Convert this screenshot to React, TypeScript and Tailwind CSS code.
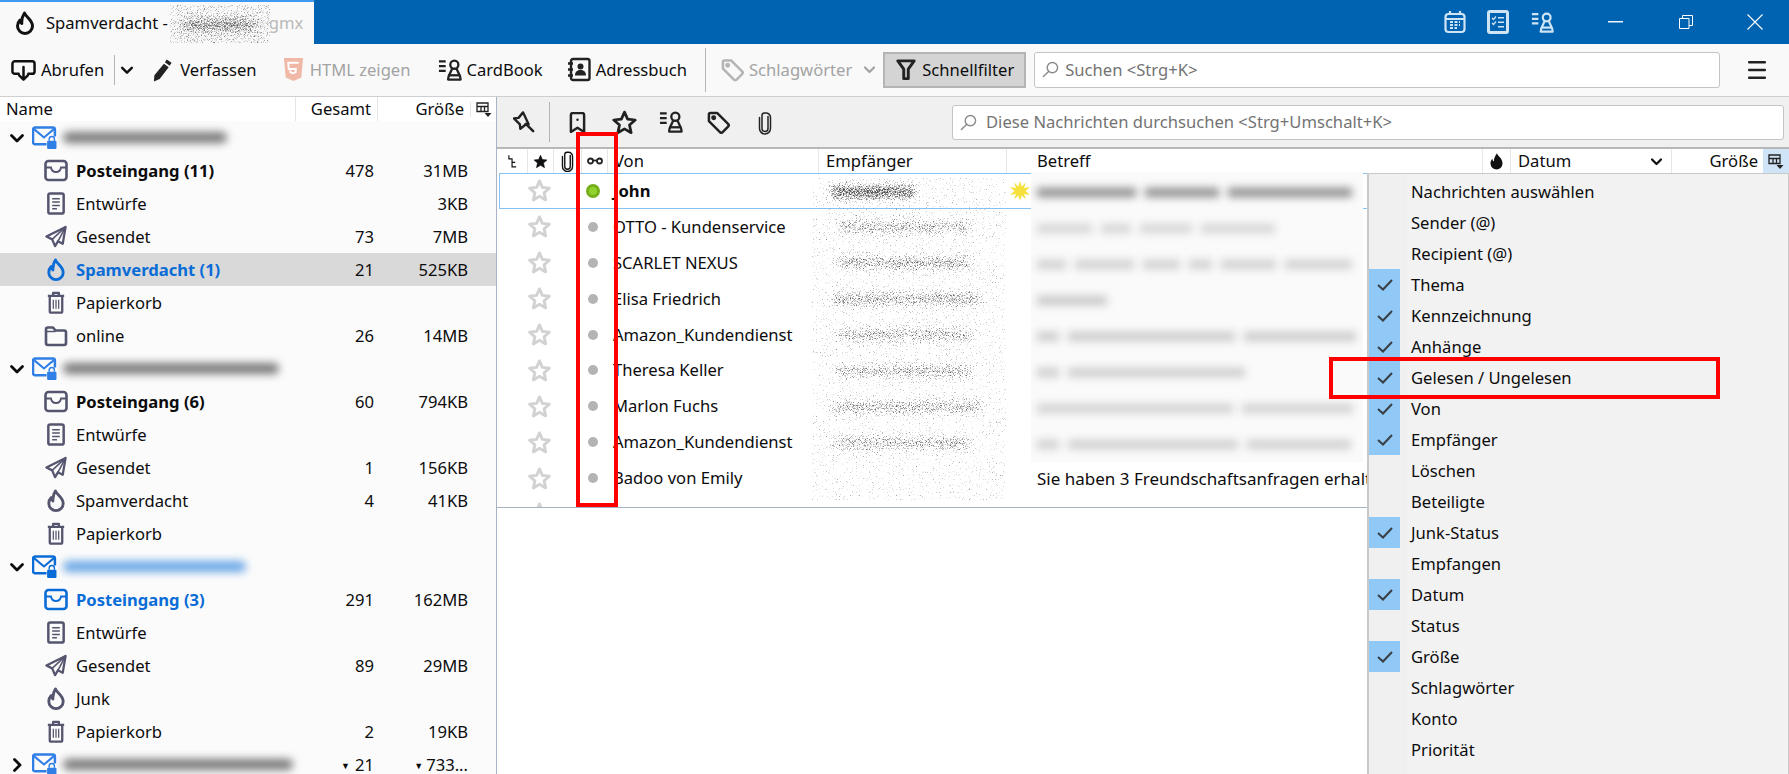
import React from "react";

type IconProps = { className?: string };

const Flame: React.FC<IconProps> = ({ className }) => (
    <svg viewBox="0 0 20 24" fill="none" stroke="currentColor" strokeWidth="3" strokeLinejoin="round" className={className}>
        <path d="M9.500 2c.5 3.500 8 6.500 8 13a7.500 7.500 0 0 1-15 0c0-2.500 1-4.500 2.500-6 0 1.500.6 2.800 1.800 3.500C6.500 8.500 7.800 4.500 9.500 2z" />
    </svg>
);

const Inbox: React.FC<IconProps> = ({ className }) => (
    <svg viewBox="0 0 24 22" fill="none" stroke="currentColor" strokeWidth="2.600" className={className}>
        <rect x="1.500" y="1.500" width="21" height="19" rx="3" />
        <path d="M2 8h5c.5 3 2 4.500 5 4.500s4.500-1.500 5-4.500h5" strokeWidth="1.800" />
    </svg>
);

const Draft: React.FC<IconProps> = ({ className }) => (
    <svg viewBox="0 0 20 24" fill="none" stroke="currentColor" strokeWidth="2.600" className={className}>
        <rect x="2" y="1.500" width="16" height="21" rx="2" />
        <path d="M6 7h8M6 10.500h8M6 14h8M6 17.500h5" strokeWidth="1.500" />
    </svg>
);

const Sent: React.FC<IconProps> = ({ className }) => (
    <svg viewBox="0 0 24 24" fill="none" stroke="currentColor" strokeWidth="2.400" strokeLinejoin="round" className={className}>
        <path d="M22 2 2 12l6 3 3 7 3-5 5 2.500z" />
        <path d="M22 2 8 15M22 2l-8 15" strokeWidth="1.600" />
    </svg>
);

const Trash: React.FC<IconProps> = ({ className }) => (
    <svg viewBox="0 0 20 24" fill="none" stroke="currentColor" strokeWidth="2.400" strokeLinejoin="round" className={className}>
        <path d="M1.500 5h17M7 5V2h6v3" />
        <path d="M3.500 5.500v15.500a1.500 1.500 0 0 0 1.500 1.500h10a1.500 1.500 0 0 0 1.500-1.500V5.500" />
        <path d="M7.200 9v9.500M10 9v9.500M12.800 9v9.500" strokeWidth="1.300" />
    </svg>
);

const Folder: React.FC<IconProps> = ({ className }) => (
    <svg viewBox="0 0 24 22" fill="none" stroke="currentColor" strokeWidth="2.600" strokeLinejoin="round" className={className}>
        <path d="M2 5a2 2 0 0 1 2-2h5l2.500 3H20a2 2 0 0 1 2 2v10.500a2 2 0 0 1-2 2H4a2 2 0 0 1-2-2z" />
        <path d="M2 7h9.500" strokeWidth="1.500" />
    </svg>
);

const Account: React.FC<{ className?: string; lock: string }> = ({ className, lock }) => (
    <svg viewBox="0 0 24 22" fill="none" className={className}>
        <path d="M14 17.500H3a2 2 0 0 1-2-2V3.500a2 2 0 0 1 2-2h17a2 2 0 0 1 2 2V10" stroke="currentColor" strokeWidth="2.400" />
        <path d="m2 3 9.500 8L21 3" stroke="currentColor" strokeWidth="2" />
        <rect x="14.500" y="14" width="9" height="8" rx="1" fill={lock} />
        <path d="M16.500 14v-1.500a2.500 2.500 0 0 1 5 0V14" stroke={lock} strokeWidth="1.400" />
    </svg>
);

const Chevron: React.FC<{ className?: string; right?: boolean }> = ({ className, right }) => (
    <svg viewBox="0 0 16 16" fill="none" stroke="currentColor" strokeWidth="2.800" strokeLinecap="round" strokeLinejoin="round" className={className}>
        <path d={right ? "M5.500 2.500 11 8l-5.500 5.500" : "M2.500 5.500 8 11l5.500-5.500"} />
    </svg>
);

const Download: React.FC<IconProps> = ({ className }) => (
    <svg viewBox="0 0 26 24" fill="none" stroke="currentColor" strokeWidth="2.600" strokeLinecap="round" strokeLinejoin="round" className={className}>
        <path d="M8 16H4a2.500 2.500 0 0 1-2.500-2.500v-8A2.500 2.500 0 0 1 4 3h18a2.500 2.500 0 0 1 2.500 2.500v8A2.500 2.500 0 0 1 22 16h-4" />
        <path d="M13 9v13M8.500 17.500 13 22l4.500-4.500" />
    </svg>
);

const Pencil: React.FC<IconProps> = ({ className }) => (
    <svg viewBox="0 0 22 24" fill="currentColor" className={className}>
        <path d="m15.500 1 5 3.500-2 3-5-3.500zM12.500 5.500l5 3.500L8 21.500 2 24l.5-6.500z" />
    </svg>
);

const Html5: React.FC<IconProps> = ({ className }) => (
    <svg viewBox="0 0 22 24" className={className}>
        <path d="M1 0h20l-1.800 20.500L11 24l-8.200-3.500z" fill="#f0b8a6" />
        <path d="M16.500 5h-11l.5 6.500h7.500l-.3 3.500-2.700 1-2.700-1-.2-2" fill="none" stroke="#fff" strokeWidth="2" />
    </svg>
);

const CardBookIcon: React.FC<IconProps> = ({ className }) => (
    <svg viewBox="0 0 26 24" fill="none" stroke="currentColor" strokeWidth="2.400" strokeLinejoin="round" className={className}>
        <path d="M1 3h7M1 8h7M1 13h7" />
        <circle cx="17" cy="6.500" r="4.200" />
        <path d="M14.500 10.500c0 3-4 6-4 11.500h13c0-5.500-4-8.500-4-11.500" />
        <path d="M11 17.500h12" />
    </svg>
);

const AddressBook: React.FC<IconProps> = ({ className }) => (
    <svg viewBox="0 0 24 24" fill="none" stroke="currentColor" strokeWidth="2.400" className={className}>
        <rect x="4" y="1.500" width="18.500" height="21" rx="2" />
        <path d="M1 6h5M1 12h5M1 18h5" />
        <circle cx="13.500" cy="9" r="3" fill="currentColor" stroke="none" />
        <path d="M8 18c0-4 2.500-5.500 5.500-5.500S19 14 19 18z" fill="currentColor" stroke="none" />
    </svg>
);

const Tag: React.FC<IconProps> = ({ className }) => (
    <svg viewBox="0 0 24 24" fill="none" stroke="currentColor" strokeWidth="2.600" strokeLinejoin="round" className={className}>
        <path d="M2 3.500A1.500 1.500 0 0 1 3.500 2h7L22 13.500a2 2 0 0 1 0 2.800L16.300 22a2 2 0 0 1-2.800 0L2 10.500z" />
        <circle cx="7" cy="7" r="1.300" fill="currentColor" />
    </svg>
);

const Funnel: React.FC<IconProps> = ({ className }) => (
    <svg viewBox="0 0 22 24" fill="none" stroke="currentColor" strokeWidth="3.200" strokeLinejoin="round" className={className}>
        <path d="M2 2h18l-6.500 9v10.500h-5V11z" />
    </svg>
);

const Search: React.FC<IconProps> = ({ className }) => (
    <svg viewBox="0 0 18 18" fill="none" stroke="currentColor" strokeWidth="1.500" strokeLinecap="round" className={className}>
        <circle cx="11" cy="7" r="5.500" />
        <path d="M7 11 1.500 16.500" />
    </svg>
);

const Pin: React.FC<IconProps> = ({ className }) => (
    <svg viewBox="0 0 24 24" fill="none" stroke="currentColor" strokeWidth="2.600" strokeLinejoin="round" className={className}>
        <path d="M11 1.500 6 7.500l-5 .5 6.500 6.500.5 5 5.500-4.500 3.500-.5z" />
        <path d="m14 14 8 8" strokeLinecap="round" strokeWidth="2.800" />
    </svg>
);

const Bookmark: React.FC<IconProps> = ({ className }) => (
    <svg viewBox="0 0 18 22" fill="none" stroke="currentColor" strokeWidth="2.600" strokeLinejoin="round" className={className}>
        <path d="M2 3a2 2 0 0 1 2-2h10a2 2 0 0 1 2 2v18l-7-4.500L2 21z" />
        <circle cx="9" cy="8" r="1.300" fill="currentColor" stroke="none" />
    </svg>
);

const Star: React.FC<{ className?: string; filled?: boolean; sw?: string }> = ({ className, filled, sw = "2.600" }) => (
    <svg viewBox="0 0 24 24" fill={filled ? "currentColor" : "none"} stroke="currentColor" strokeWidth={sw} strokeLinejoin="round" className={className}>
        <path d="m12 2 3 6.800 7.300.8-5.500 4.900 1.600 7.300L12 18.100l-6.400 3.700 1.600-7.300-5.500-4.900 7.300-.8z" />
    </svg>
);

const Clip: React.FC<IconProps> = ({ className }) => (
    <svg viewBox="0 0 14 24" fill="none" stroke="currentColor" strokeWidth="1.500" strokeLinecap="round" className={className}>
        <path d="M10 6v12a3 3 0 0 1-6 0V5a2.500 2.500 0 0 1 2.500-2.500h1A4.500 4.500 0 0 1 12.500 7v11a5.500 5.500 0 0 1-11 0V7" />
    </svg>
);

const Picker: React.FC<IconProps> = ({ className }) => (
    <svg viewBox="0 0 16 15" fill="none" stroke="currentColor" strokeWidth="1.300" className={className}>
        <path d="M1 1h11v8.500H1zM1 4.500h11M5 4.500v5M8.500 4.500v5" />
        <path d="M8.500 11h7L12 15z" fill="currentColor" stroke="none" />
    </svg>
);

const Sparkle: React.FC<IconProps> = ({ className }) => (
    <svg viewBox="0 0 20 20" fill="#f5e03c" className={className}>
        <path d="m10 0 1.700 5.500L16 1.500 14 7l6-1-4.500 4 4.500 4-6-1 2 5.500-4.300-4L10 20l-1.700-5.500-4.300 4L6 13l-6 1 4.500-4L0 6l6 1-2-5.500 4.300 4z" />
    </svg>
);

// stippled redaction, used where the reference has noise over the text
const Stipple: React.FC<{ id: string; w: number; h: number; base?: string; bars: [number, number, number, number, number][]; className?: string }> = ({
    id,
    w,
    h,
    base = "0",
    bars,
    className,
}) => (
    <svg width={w} height={h} className={className}>
        <filter id={id} filterUnits="userSpaceOnUse" x="0" y="0" width={w} height={h} colorInterpolationFilters="sRGB">
            <feGaussianBlur in="SourceAlpha" stdDeviation="5" result="b" />
            <feTurbulence type="fractalNoise" baseFrequency="1.300" numOctaves="1" seed="7" result="t" />
            <feColorMatrix in="t" type="matrix" values="0 0 0 0 0.4  0 0 0 0 0.4  0 0 0 0 0.4  1 0 0 0 0" result="n" />
            <feComposite in="n" in2="b" operator="arithmetic" k1="0" k2="1" k3="0.42" k4={base} />
            <feComponentTransfer>
                <feFuncA type="linear" slope="3.500" intercept="-2.200" />
            </feComponentTransfer>
        </filter>
        <g filter={`url(#${id})`}>
            {bars.map(([x, y, bw, bh, o], i) => (
                <rect key={i} x={x} y={y} width={bw} height={bh} fillOpacity={o} />
            ))}
        </g>
    </svg>
);

type Row = {
    name: string;
    icon?: "inbox" | "draft" | "sent" | "junk" | "trash" | "folder";
    total?: string;
    size?: string;
    bold?: boolean;
    blue?: boolean;
    selected?: boolean;
    account?: { blur: string; color: string; closed?: boolean };
};

const rows: Row[] = [
    { name: "", account: { blur: "w-[164px]", color: "gray" } },
    { name: "Posteingang (11)", icon: "inbox", total: "478", size: "31MB", bold: true },
    { name: "Entwürfe", icon: "draft", size: "3KB" },
    { name: "Gesendet", icon: "sent", total: "73", size: "7MB" },
    { name: "Spamverdacht (1)", icon: "junk", total: "21", size: "525KB", bold: true, blue: true, selected: true },
    { name: "Papierkorb", icon: "trash" },
    { name: "online", icon: "folder", total: "26", size: "14MB" },
    { name: "", account: { blur: "w-[216px]", color: "gray" } },
    { name: "Posteingang (6)", icon: "inbox", total: "60", size: "794KB", bold: true },
    { name: "Entwürfe", icon: "draft" },
    { name: "Gesendet", icon: "sent", total: "1", size: "156KB" },
    { name: "Spamverdacht", icon: "junk", total: "4", size: "41KB" },
    { name: "Papierkorb", icon: "trash" },
    { name: "", account: { blur: "w-[183px]", color: "blue" } },
    { name: "Posteingang (3)", icon: "inbox", total: "291", size: "162MB", bold: true, blue: true },
    { name: "Entwürfe", icon: "draft" },
    { name: "Gesendet", icon: "sent", total: "89", size: "29MB" },
    { name: "Junk", icon: "junk" },
    { name: "Papierkorb", icon: "trash", total: "2", size: "19KB" },
    { name: "", total: "21", size: "733...", account: { blur: "w-[230px]", color: "gray", closed: true } },
];

const FolderIcon: React.FC<{ icon: Row["icon"]; color: string }> = ({ icon, color }) => {
    const cls = `h-[23px] w-[24px] ${color}`;
    if (icon === "inbox") return <Inbox className={cls} />;
    if (icon === "draft") return <Draft className={cls} />;
    if (icon === "sent") return <Sent className={cls} />;
    if (icon === "junk") return <Flame className={cls} />;
    if (icon === "trash") return <Trash className={cls} />;
    return <Folder className={cls} />;
};

const FolderRow: React.FC<{ row: Row }> = ({ row }) => {
    const { account } = row;
    const closed = account?.closed;
    return (
        <div className={`flex h-[33px] shrink-0 items-center pr-[28px] ${row.selected ? "bg-[#d9d9d9]" : ""}`}>
            <div className="flex min-w-0 flex-1 items-center">
                {account ? (
                    <>
                        <Chevron right={account.closed} className="ml-[9px] h-4 w-4 text-[#0c0c0d]" />
                        <Account
                            lock={account.color === "blue" ? "#0a6cd6" : "#2f7fe6"}
                            className={`ml-[7px] h-[23px] w-[25px] ${account.color === "blue" ? "text-[#0a6cd6]" : "text-[#2f7fe6]"}`}
                        />
                        <div className="flex h-[33px] flex-1 items-center overflow-hidden pl-[6px]">
                            <div className={`h-[11px] rounded-full blur-[4px] ${account.color === "blue" ? "bg-[#6aa6e6]" : "bg-[#787878]"} ${account.blur}`} />
                        </div>
                    </>
                ) : (
                    <>
                        <div className="ml-[44px] flex w-[32px] shrink-0">
                            <FolderIcon icon={row.icon} color={row.blue ? "text-[#0a6cd6]" : "text-[#55556f]"} />
                        </div>
                        <span className={`pt-[1px] ${row.bold ? "font-bold" : ""} ${row.blue ? "text-[#0a6cd6]" : "text-[#0c0c0d]"}`}>{row.name}</span>
                    </>
                )}
            </div>
            <div className="w-[60px] pt-[1px] text-right leading-[18px] whitespace-nowrap">
                {closed && <span className="mr-[5px] align-[2px] text-[9px]">▼</span>}
                {row.total}
            </div>
            <div className="w-[94px] pt-[1px] text-right leading-[18px] whitespace-nowrap">
                {closed && <span className="mr-[3px] align-[2px] text-[9px]">▼</span>}
                {row.size}
            </div>
        </div>
    );
};

const messages = [
    { from: "John", unread: true },
    { from: "OTTO - Kundenservice" },
    { from: "SCARLET NEXUS" },
    { from: "Elisa Friedrich" },
    { from: "Amazon_Kundendienst" },
    { from: "Theresa Keller" },
    { from: "Marlon Fuchs" },
    { from: "Amazon_Kundendienst" },
    { from: "Badoo von Emily", subject: "Sie haben 3 Freundschaftsanfragen erhalten" },
];

const MessageRow: React.FC<{ from: string; unread?: boolean; subject?: string }> = ({ from, unread, subject }) => (
    <div className={`flex h-[35.9px] items-center ${unread ? "ml-[2px] border border-[#86c3f3]" : "ml-[3px]"}`}>
        <div className="w-[26px]" />
        <div className="flex w-[26px] justify-center">
            <Star className="h-[23px] w-[23px] text-[#d2d2d2]" sw="3" />
        </div>
        <div className="w-[28px]" />
        <div className="flex w-[25px] justify-center">
            {unread ? (
                <div className="h-[14px] w-[14px] rounded-full border-[3px] border-[#76ae1c] bg-[#92d22e]" />
            ) : (
                <div className="h-[10px] w-[10px] rounded-full bg-[#b4b4b4]" />
            )}
        </div>
        <div className={`w-[213px] pt-[1px] pl-[8px] whitespace-nowrap ${unread ? "font-bold" : ""}`}>{from}</div>
        <div className="w-[186px]" />
        {unread && <Sparkle className="ml-[6px] h-[20px] w-[20px] shrink-0" />}
        <div className="pt-[1px] pl-[33px] text-[17px] whitespace-nowrap">{subject}</div>
    </div>
);

const menuItems: [string, boolean][] = [
    ["Nachrichten auswählen", false],
    ["Sender (@)", false],
    ["Recipient (@)", false],
    ["Thema", true],
    ["Kennzeichnung", true],
    ["Anhänge", true],
    ["Gelesen / Ungelesen", true],
    ["Von", true],
    ["Empfänger", true],
    ["Löschen", false],
    ["Beteiligte", false],
    ["Junk-Status", true],
    ["Empfangen", false],
    ["Datum", true],
    ["Status", false],
    ["Größe", true],
    ["Schlagwörter", false],
    ["Konto", false],
    ["Priorität", false],
];

// word pieces of the blurred subjects
const blurRows = [
    { tone: "bg-[#8c8c8c]", words: ["w-[99px]", "w-[74px]", "w-[124px]"] },
    { tone: "bg-[#d4d4d4]", words: ["w-[55px]", "w-[30px]", "w-[52px]", "w-[74px]"] },
    { tone: "bg-[#cfcfcf]", words: ["w-[29px]", "w-[59px]", "w-[37px]", "w-[23px]", "w-[55px]", "w-[67px]"] },
    { tone: "bg-[#c6c6c6]", words: ["w-[70px]"] },
    { tone: "bg-[#cacaca]", words: ["w-[22px]", "w-[167px]", "w-[112px]"] },
    { tone: "bg-[#cccccc]", words: ["w-[22px]", "w-[177px]"] },
    { tone: "bg-[#d0d0d0]", words: ["w-[196px]", "w-[111px]"] },
    { tone: "bg-[#cecece]", words: ["w-[22px]", "w-[170px]", "w-[104px]"] },
];

export default function App() {
    return (
        <div className="relative flex h-[774px] w-[1789px] flex-col overflow-hidden bg-white font-['Noto_Sans','Open_Sans',sans-serif] text-[16.6px] text-[#0c0c0d]">
            {/* title bar */}
            <div className="flex h-[44px] shrink-0 items-center bg-[#0063b1]">
                <div className="relative flex h-[44px] w-[314px] items-center overflow-hidden border-t-2 border-[#3d9bf0] bg-[#f9f9fa]">
                    <Flame className="ml-[15px] h-[24px] w-[20px] text-[#111]" />
                    <span className="ml-[11px] whitespace-nowrap">Spamverdacht -</span>
                    <span className="ml-[101px] whitespace-nowrap text-[#b8b8b8]">gmx</span>
                    <Stipple id="tabNoise" w={100} h={38} base="0.1" bars={[[12, 15, 76, 10, 0.5]]} className="absolute top-[3px] left-[170px] bg-[#fafafa]" />
                </div>
                <div className="flex-1" />
                <svg viewBox="0 0 22 24" fill="none" stroke="#cfe5f6" strokeWidth="2.200" className="h-[24px] w-[22px]">
                    <rect x="1.500" y="4" width="19" height="18" rx="3" />
                    <path d="M6 1v4M16 1v4M2 9h18" />
                    <path d="M6 12h10M6 15h10M6 18h7" strokeWidth="2" strokeDasharray="3 1.500" />
                </svg>
                <svg viewBox="0 0 22 24" fill="#cfe5f6" className="ml-[21px] h-[24px] w-[22px]">
                    <path fillRule="evenodd" d="M3 0h16a3 3 0 0 1 3 3v18a3 3 0 0 1-3 3H3a3 3 0 0 1-3-3V3a3 3 0 0 1 3-3zm0 3v18h16V3z" />
                    <path d="M11 7h6v1.500h-6zM11 11.500h6V13h-6zM11 16h6v1.500h-6z" />
                    <path d="m5 8 1.500 1.500L9 6.500M5 13l1.500 1.500L9 11.500" fill="none" stroke="#cfe5f6" strokeWidth="1.300" />
                </svg>
                <CardBookIcon className="ml-[22px] h-[25px] w-[24px] text-[#cfe5f6]" />
                <svg viewBox="0 0 16 2" className="ml-[53px] h-[2px] w-[15px]" fill="#fff">
                    <rect width="16" height="1.500" />
                </svg>
                <svg viewBox="0 0 14 14" fill="none" stroke="#fff" strokeWidth="1" className="ml-[56px] h-[14px] w-[14px]">
                    <path d="M.500 3.500h9.500v10H.500zM3.500 3.500V.500h10v10H10" />
                </svg>
                <svg viewBox="0 0 16 16" fill="none" stroke="#fff" strokeWidth="1.100" className="mr-[26px] ml-[54px] h-[16px] w-[16px]">
                    <path d="m.500.500 15 15M15.500.500l-15 15" />
                </svg>
            </div>

            {/* main toolbar */}
            <div className="flex h-[53px] shrink-0 items-center border-b border-[#cfcfd1] bg-[#f9f9fa] pb-[1px] [&>span]:pt-[1px]">
                <Download className="ml-[11px] h-[24px] w-[25px] text-[#111]" />
                <span className="ml-[5px]">Abrufen</span>
                <div className="ml-[10px] h-[30px] w-px bg-[#b5b5b5]" />
                <Chevron className="ml-[5px] h-[14px] w-[14px] text-[#111]" />
                <Pencil className="ml-[18px] h-[24px] w-[21px] text-[#222]" />
                <span className="ml-[7px]">Verfassen</span>
                <Html5 className="ml-[26px] h-[25px] w-[21px]" />
                <span className="ml-[6px] text-[#a3a3a3]">HTML zeigen</span>
                <CardBookIcon className="ml-[28px] h-[24px] w-[25px] text-[#222]" />
                <span className="ml-[3px]">CardBook</span>
                <AddressBook className="ml-[24px] h-[25px] w-[24px] text-[#222]" />
                <span className="ml-[5px]">Adressbuch</span>
                <div className="ml-[18px] h-[44px] w-px bg-[#b5b5b5]" />
                <Tag className="ml-[15px] h-[24px] w-[23px] text-[#b4b4b4]" />
                <span className="ml-[5px] text-[#a3a3a3]">Schlagwörter</span>
                <Chevron className="ml-[11px] h-[13px] w-[13px] text-[#a3a3a3]" />
                <div className="ml-[7px] flex h-[36px] w-[143px] items-center border-2 border-[#b4b4b4] bg-[#d4d4d4]">
                    <Funnel className="ml-[11px] h-[24px] w-[20px] text-[#222]" />
                    <span className="ml-[6px] pt-[1px]">Schnellfilter</span>
                </div>
                <div className="ml-[8px] flex h-[36px] w-[686px] items-center rounded-[3px] border border-[#c4c4c4] bg-white">
                    <Search className="ml-[7px] h-[17px] w-[17px] text-[#8a8a8a]" />
                    <span className="ml-[6px] pt-[1px] text-[#737373]">Suchen &lt;Strg+K&gt;</span>
                </div>
                <svg viewBox="0 0 18 18" fill="#222" className="ml-[28px] h-[18px] w-[18px]">
                    <rect width="18" height="2.400" rx="1" />
                    <rect y="7.800" width="18" height="2.400" rx="1" />
                    <rect y="15.600" width="18" height="2.400" rx="1" />
                </svg>
            </div>

            <div className="flex min-h-0 flex-1">
                {/* folder pane */}
                <div className="flex w-[497px] shrink-0 flex-col overflow-hidden border-r border-[#aab3c5] bg-[#fbfbfb]">
                    <div className="flex h-[24px] shrink-0 items-center bg-white">
                        <div className="w-[295px] pl-[6px]">Name</div>
                        <div className="w-[82px] border-l border-[#e6e6e6] pr-[6px] text-right">Gesamt</div>
                        <div className="w-[93px] border-l border-[#e6e6e6] pr-[6px] text-right">Größe</div>
                        <div className="flex flex-1 justify-center border-l border-[#e6e6e6]">
                            <Picker className="h-[15px] w-[16px] text-[#222]" />
                        </div>
                    </div>
                    {rows.map((row, i) => (
                        <FolderRow key={i} row={row} />
                    ))}
                </div>

                {/* message pane */}
                <div className="flex min-w-0 flex-1 flex-col">
                    <div className="flex h-[52px] shrink-0 items-center border-b-2 border-[#b8b8b8] bg-[#f0f0f0]">
                        <Pin className="ml-[16px] h-[22px] w-[22px] text-[#222]" />
                        <div className="ml-[14px] h-[40px] w-px bg-[#b5b5b5]" />
                        <Bookmark className="ml-[19px] h-[21px] w-[17px] text-[#222]" />
                        <Star className="ml-[26px] h-[25px] w-[25px] text-[#222]" />
                        <CardBookIcon className="ml-[22px] h-[24px] w-[25px] text-[#222]" />
                        <Tag className="ml-[23px] h-[23px] w-[23px] text-[#222]" />
                        <Clip className="ml-[28px] h-[25px] w-[14px] text-[#222]" />
                        <div className="ml-[180px] flex h-[35px] w-[832px] items-center rounded-[3px] border border-[#c4c4c4] bg-white">
                            <Search className="ml-[7px] h-[17px] w-[17px] text-[#8a8a8a]" />
                            <span className="ml-[9px] text-[#737373]">Diese Nachrichten durchsuchen &lt;Strg+Umschalt+K&gt;</span>
                        </div>
                    </div>

                    <div className="flex h-[24px] shrink-0 items-center bg-white [&>div]:h-[24px]">
                        <div className="flex w-[30px] items-center justify-center">
                            <svg viewBox="0 0 10 14" fill="none" stroke="#111" strokeWidth="1.300" className="h-[13px] w-[9px]">
                                <path d="M1 0v4h3.500v9H9M4.500 8H8" />
                            </svg>
                        </div>
                        <div className="flex w-[26px] items-center justify-center border-l border-[#e6e6e6]">
                            <Star filled className="h-[15px] w-[15px] text-[#111]" sw="1" />
                        </div>
                        <div className="flex w-[28px] items-center justify-center border-l border-[#e6e6e6]">
                            <Clip className="h-[22px] w-[13px] text-[#111]" />
                        </div>
                        <div className="flex w-[26px] items-center justify-center border-l border-[#e6e6e6]">
                            <svg viewBox="0 0 16 8" fill="none" stroke="#222" strokeWidth="1.800" className="h-[8px] w-[16px]">
                                <circle cx="3.500" cy="4" r="2.500" />
                                <circle cx="12.500" cy="4" r="2.500" />
                                <path d="M6 3.500h4" />
                            </svg>
                        </div>
                        <div className="w-[211px] border-l border-[#e6e6e6] pl-[6px] leading-[24px]">Von</div>
                        <div className="w-[188px] border-l border-[#e6e6e6] pl-[7px] leading-[24px]">Empfänger</div>
                        <div className="w-[476px] border-l border-[#e6e6e6] pl-[30px] leading-[24px]">Betreff</div>
                        <div className="flex w-[28px] items-center justify-center border-l border-[#e6e6e6]">
                            <svg viewBox="0 0 14 18" fill="#111" className="h-[17px] w-[13px]">
                                <path d="M7.500 0c.5 3 6 5 6 11a6.500 6.500 0 0 1-13 0c0-2 .8-3.500 2-5 .2 1.500.8 2.500 1.800 3C3.800 6 5.500 3 7.500 0z" />
                            </svg>
                        </div>
                        <div className="flex w-[161px] items-center justify-between border-l border-[#e6e6e6] pr-[8px] pl-[7px]">
                            Datum
                            <Chevron className="h-[13px] w-[13px] text-[#111]" />
                        </div>
                        <div className="w-[92px] border-l border-[#e6e6e6] pr-[5px] text-right leading-[24px]">Größe</div>
                        <div className="flex flex-1 items-center justify-center bg-[#cfe4f7]">
                            <Picker className="h-[15px] w-[16px] text-[#222]" />
                        </div>
                    </div>

                    <div className="h-[335px] shrink-0 overflow-hidden border-b border-[#aab3c5]">
                        {messages.map((m, i) => (
                            <MessageRow key={i} from={m.from} unread={m.unread} subject={m.subject} />
                        ))}
                        <MessageRow from="" />
                    </div>
                </div>
            </div>

            {/* redactions over the message list */}
            <Stipple
                id="toNoise"
                w={194}
                h={322}
                bars={[
                    [18, 8, 85, 12, 0.8],
                    [26, 44, 134, 10, 0.5],
                    [26, 80, 134, 10, 0.55],
                    [20, 116, 150, 10, 0.55],
                    [24, 152, 136, 10, 0.5],
                    [24, 188, 136, 10, 0.5],
                    [20, 224, 150, 10, 0.5],
                    [22, 260, 136, 10, 0.5],
                ]}
                className="absolute top-[178px] left-[812px]"
            />
            <div className="absolute top-[172px] left-[1031px] flex h-[290px] w-[332px] flex-col overflow-hidden bg-[#fafafa] pt-[2px]">
                {blurRows.map((row, i) => (
                    <div key={i} className="flex h-[36px] shrink-0 items-center gap-[9px] pl-[6px]">
                        {row.words.map((w, j) => (
                            <div key={j} className={`h-[9px] shrink-0 blur-[4px] ${w} ${row.tone}`} />
                        ))}
                    </div>
                ))}
            </div>

            {/* column picker */}
            <div className="absolute top-[173px] left-[1367px] flex h-[601px] w-[422px] flex-col border-t border-r border-l-2 border-[#c9c9c9] bg-[#f2f2f2] pt-[2px]">
                <div className="absolute top-0 bottom-0 left-0 w-[38px] bg-[#f0f0f0]" />
                {menuItems.map(([label, checked]) => (
                    <div key={label} className="relative flex h-[31px] shrink-0 items-center">
                        <div className={`flex h-[31px] w-[31px] items-center justify-center ${checked ? "bg-[#90c8f6]" : ""}`}>
                            {checked && (
                                <svg viewBox="0 0 16 12" fill="none" stroke="#3a3f45" strokeWidth="2" className="h-[12px] w-[16px]">
                                    <path d="m1 6 5 4.500L15 1" />
                                </svg>
                            )}
                        </div>
                        <span className="ml-[11px] pt-[2px] whitespace-nowrap">{label}</span>
                    </div>
                ))}
            </div>

            {/* red annotations */}
            <div className="absolute top-[132px] left-[576px] h-[375px] w-[42px] border-4 border-[#ff0000]" />
            <div className="absolute top-[357px] left-[1329px] h-[42px] w-[391px] border-4 border-[#ff0000]" />
        </div>
    );
}
